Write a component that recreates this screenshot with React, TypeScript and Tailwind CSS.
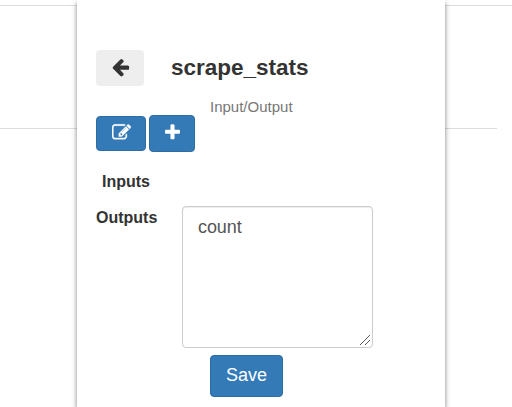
import React from "react";

const PATHS = {
  back: "M1536 896v128q0 53-32.5 90.5t-84.5 37.5h-704l293 294q38 36 38 90t-38 90l-75 76q-37 37-90 37-52 0-91-37l-651-652q-37-37-37-90 0-52 37-91l651-650q38-38 91-38 52 0 90 38l75 74q38 38 38 91t-38 91l-293 293h704q52 0 84.5 37.5t32.5 90.5z",
  edit: "M888 1184l116-116-152-152-116 116v56h96v96h56zm440-720q-16-16-33 1l-350 350q-17 17-1 33t33-1l350-350q17-17 1-33zm80 594v190q0 119-84.5 203.5t-203.5 84.5h-832q-119 0-203.5-84.5t-84.5-203.5v-832q0-119 84.5-203.5t203.5-84.5h832q63 0 117 25 15 7 18 23 3 17-9 29l-49 49q-14 14-32 8-23-6-45-6h-832q-66 0-113 47t-47 113v832q0 66 47 113t113 47h832q66 0 113-47t47-113v-126q0-13 9-22l64-64q15-15 35-7t20 29zm-96-738l288 288-672 672h-288v-288zm444 132l-92 92-288-288 92-92q28-28 68-28t68 28l152 152q28 28 28 68t-28 68z",
  plus: "M1600 736v192q0 40-28 68t-68 28h-416v416q0 40-28 68t-68 28h-192q-40 0-68-28t-28-68v-416h-416q-40 0-68-28t-28-68v-192q0-40 28-68t68-28h416v-416q0-40 28-68t68-28h192q40 0 68 28t28 68v416h416q40 0 68 28t28 68z",
};

function Icon({ name, className }: { name: keyof typeof PATHS; className: string }) {
  return (
    <svg viewBox="0 0 1792 1792" fill="currentColor" className={className} aria-hidden="true">
      <path d={PATHS[name]} />
    </svg>
  );
}

const primary = "flex items-center justify-center rounded-[4px] border border-[#2e6da4] bg-[#337ab7] text-white";

export default function App() {
  return (
    <div className="flex h-[407px] w-[512px] overflow-hidden bg-white font-['Liberation_Sans',Arial,sans-serif] text-[#333]">
      <div className="w-[77px] shrink-0 pt-[5px]">
        <div className="h-[124px] border-y border-[#ddd]" />
      </div>
      <main className="relative flex w-[368px] shrink-0 flex-col bg-white pl-[19px] pt-[50px] shadow-[0_3px_5px_rgba(0,0,0,0.5)]">
        <header className="flex h-9 items-center">
          <button aria-label="Back" className="flex h-9 w-12 items-center justify-center rounded-[4px] bg-[#eee] pb-[2px] pl-[3px]">
            <Icon name="back" className="h-5 w-5" />
          </button>
          <h1 className="ml-[27px] text-[22.5px] font-bold leading-9">scrape_stats</h1>
        </header>
        <p className="ml-[114px] mt-[11px] h-[18px] text-[15px] leading-[20px] text-[#777]">Input/Output</p>
        <div className="flex h-[37px] items-center gap-[3px]">
          <button aria-label="Edit" className={`${primary} h-[35px] w-[50px] pb-[2px]`}>
            <Icon name="edit" className="h-[19px] w-[19px] stroke-current stroke-[35]" />
          </button>
          <button aria-label="Add" className={`${primary} h-[37px] w-[46px] pb-[2px]`}>
            <Icon name="plus" className="h-[19px] w-[19px]" />
          </button>
        </div>
        <div className="ml-[6px] mt-[20px] h-[34px] text-[16px] font-bold leading-[20px]">Inputs</div>
        <div className="flex">
          <label htmlFor="outputs" className="w-[86px] pt-[2px] text-[16px] font-bold leading-[20px]">Outputs</label>
          <div className="relative">
            <textarea
              id="outputs"
              defaultValue="count"
              className="block h-[142px] w-[191px] resize-none rounded-[4px] border border-[#ccc] bg-white px-[15px] py-[8px] text-[18px] leading-[24px] tracking-[-0.1px] text-[#555] shadow-[inset_0_1px_1px_rgba(0,0,0,0.075)] outline-none"
            />
            <svg viewBox="0 0 10 10" className="pointer-events-none absolute bottom-[3px] right-[3px] h-[10px] w-[10px]" fill="none" stroke="#444" strokeWidth="0.9" aria-hidden="true">
              <path d="M0 10 10 0M5 10 10 5" />
            </svg>
          </div>
        </div>
        <button className={`${primary} ml-[114px] mt-[7px] h-[42px] w-[73px] pb-[2px] text-[18px]`}>Save</button>
      </main>
      <div className="w-[67px] shrink-0 pt-[5px]">
        <div className="border-t border-[#ddd]" />
        <div className="mt-[122px] w-[52px] border-t border-[#ddd]" />
      </div>
    </div>
  );
}
